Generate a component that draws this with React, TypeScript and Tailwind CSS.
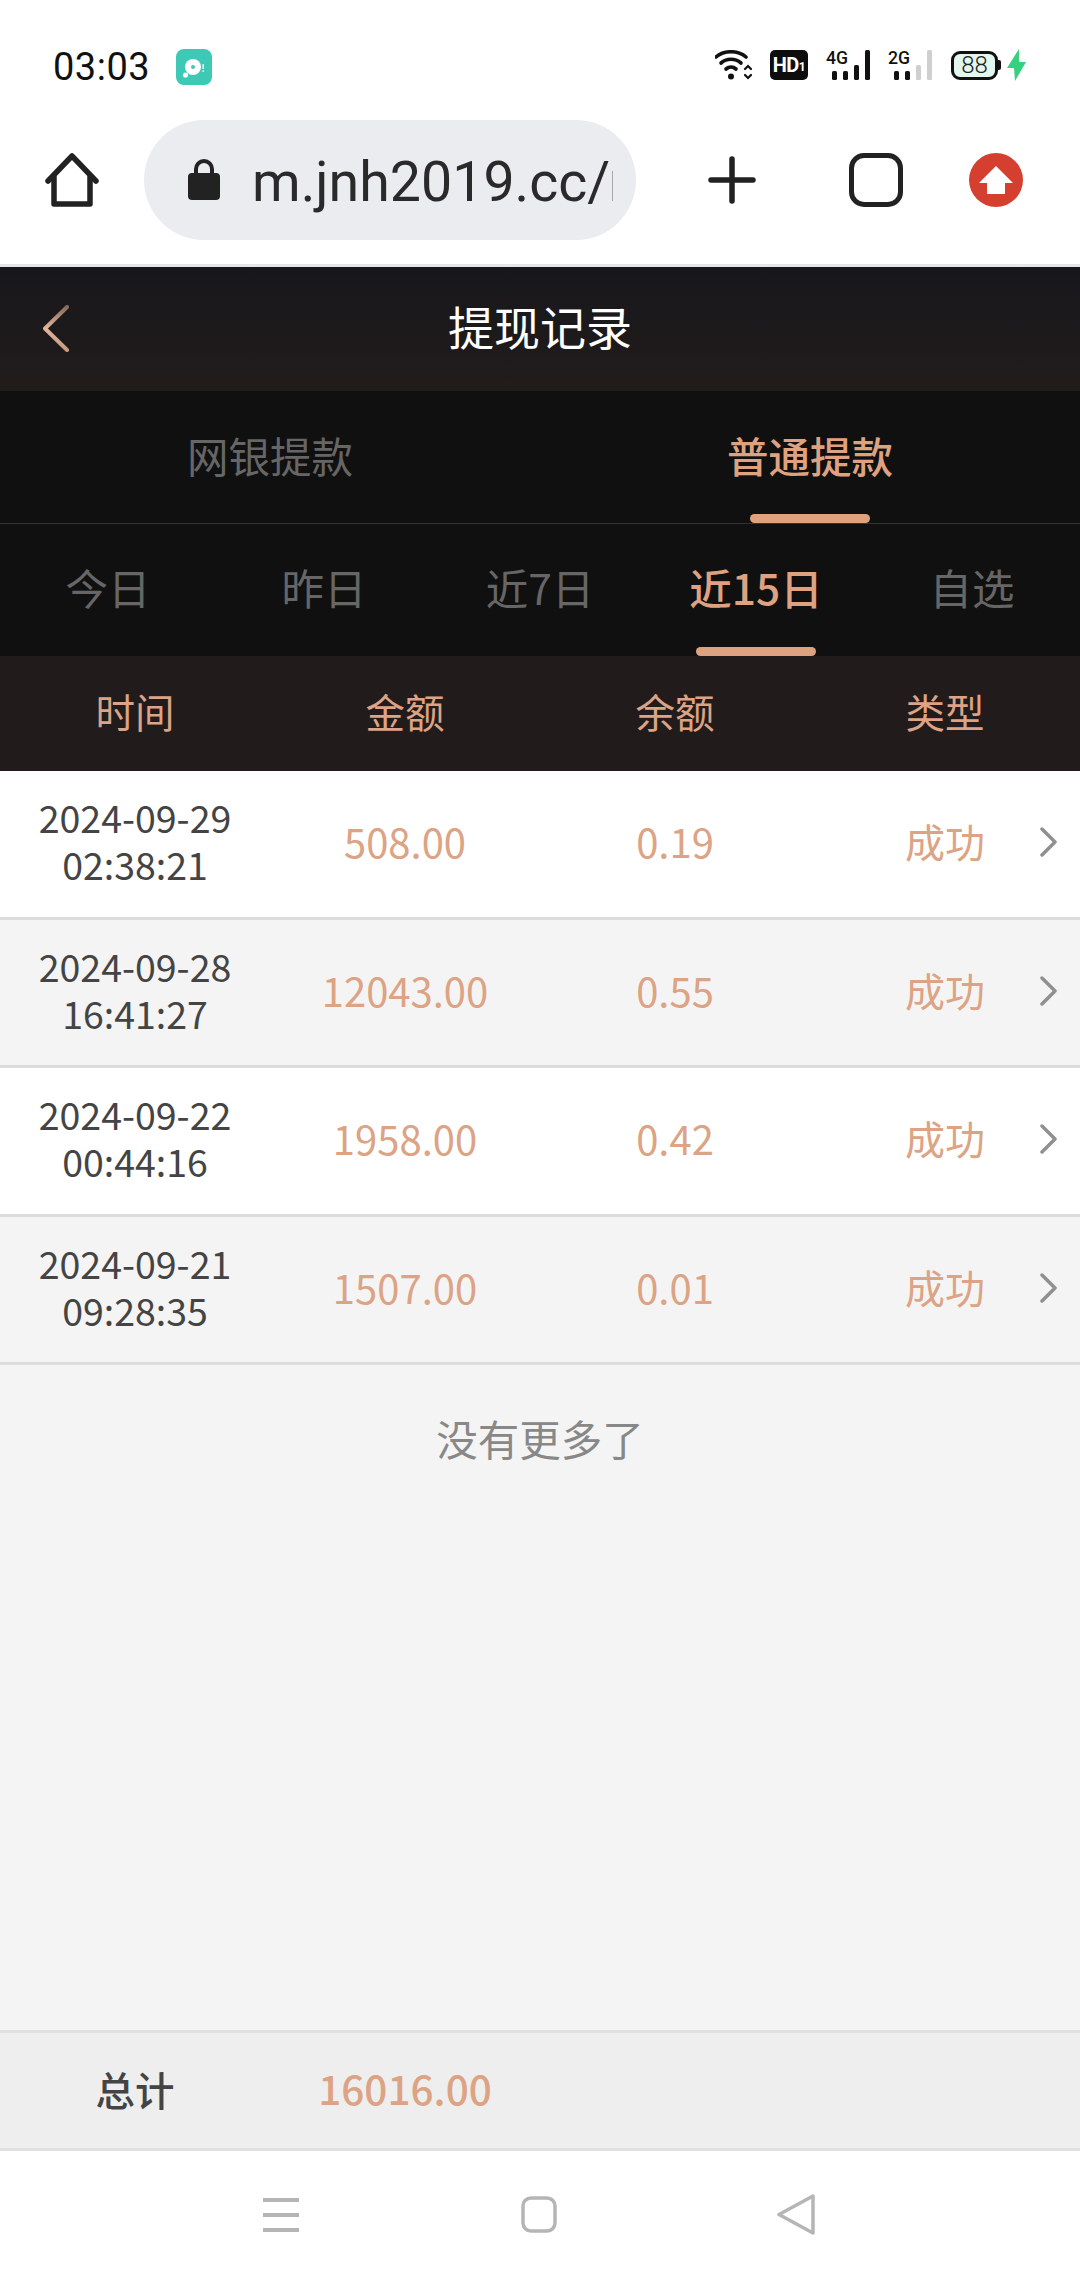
const ROWS = [
  { date: '2024-09-29', time: '02:38:21', amount: '508.00', balance: '0.19' },
  { date: '2024-09-28', time: '16:41:27', amount: '12043.00', balance: '0.55' },
  { date: '2024-09-22', time: '00:44:16', amount: '1958.00', balance: '0.42' },
  { date: '2024-09-21', time: '09:28:35', amount: '1507.00', balance: '0.01' },
];

function Signal({ label, lit }: { label: string; lit: number }) {
  return (
    <svg className="overflow-visible" width="44" height="30" viewBox="0 0 44 30">
      <text x="0" y="14" fontSize="19" fontWeight="500" fontFamily="Roboto" fill="#111" textLength="22" lengthAdjust="spacingAndGlyphs">
        {label}
      </text>
      {[
        [6, 21, 9],
        [17, 21, 9],
        [28, 15, 15],
        [39, 0, 30],
      ].map(([x, y, h], i) => (
        <rect key={x} x={x} y={y} width="5" height={h} rx="1.5" fill={i < lit ? '#111' : '#cfcfcf'} />
      ))}
    </svg>
  );
}

function StatusBar() {
  return (
    <div className="flex h-[118px] items-start justify-between pt-[48px] pr-[54px] pl-[53px] font-['Roboto',sans-serif]">
      <div className="flex items-center">
        <span className="mt-[1px] text-[38px] leading-[36px] tracking-[0.5px] text-[#111]">03:03</span>
        <svg className="ml-[26px]" width="36" height="36" viewBox="0 0 36 36">
          <rect width="36" height="36" rx="8" fill="#3ec8b6" />
          <circle cx="17" cy="18" r="8" fill="#fff" />
          <circle cx="17" cy="18" r="2" fill="#3ec8b6" />
          <circle cx="9.5" cy="26" r="2.6" fill="#fff" />
          <rect x="26.5" y="15" width="1.5" height="5" fill="#fff" />
          <rect x="26.5" y="21.5" width="1.5" height="1.5" fill="#fff" />
        </svg>
      </div>
      <div className="flex items-center pt-[1px]">
        <svg width="38" height="30" viewBox="0 0 38 30" fill="none" stroke="#111" strokeWidth="3.6" strokeLinecap="round">
          <path d="M1 7C9 0 23 0 31 7" />
          <path d="M6 13C12 8 20 8 26 13" />
          <path d="M11 19C14 16.5 18 16.5 21 19" />
          <circle cx="16" cy="26.5" r="3" fill="#111" stroke="none" />
          <path d="M30 19l3-3 3 3M30 25l3 3 3-3" strokeWidth="2.2" />
        </svg>
        <span className="ml-[17px] flex h-[30px] w-[38px] items-center justify-center rounded-[5px] bg-[#0d0d0d] text-[20px] leading-none font-bold tracking-[-0.5px] text-white">
          HD<span className="mt-[3px] text-[12px]">1</span>
        </span>
        <span className="ml-[18px] flex">
          <Signal label="4G" lit={4} />
        </span>
        <span className="ml-[18px] flex">
          <Signal label="2G" lit={2} />
        </span>
        <span className="ml-[19px] flex items-center">
          <span className="flex h-[29px] w-[47px] items-center justify-center rounded-[9px] border-[3px] border-[#111] bg-[#e2f7ee] text-[24px] leading-none font-light text-[#222]">
            88
          </span>
          <span className="h-[10px] w-[3px] rounded-r-[2px] bg-[#111]" />
        </span>
        <svg className="ml-[6px]" width="19" height="32" viewBox="0 0 19 32">
          <path d="M12 0L0 19h7l1 13 11-19h-7z" fill="#34d17f" />
        </svg>
      </div>
    </div>
  );
}

function BrowserBar() {
  return (
    <div className="flex h-[146px] items-start pt-[2px] font-['Roboto',sans-serif]">
      <div className="flex w-[144px] justify-center">
        <svg className="mt-[33px]" width="54" height="54" viewBox="0 0 54 54" fill="none" stroke="#222" strokeWidth="5.5" strokeLinecap="round" strokeLinejoin="round">
          <path d="M3 28L27 3l24 25" />
          <path d="M9 24v27h36V24" />
        </svg>
      </div>
      <div className="flex h-[120px] w-[492px] items-center overflow-hidden rounded-[60px] bg-[#ebecf0] pl-[44px]">
        <svg width="32" height="42" viewBox="0 0 32 42" className="mb-[2px] shrink-0">
          <path d="M8 18v-7a8 8 0 0 1 16 0v7" fill="none" stroke="#222" strokeWidth="4" />
          <rect y="15" width="32" height="27" rx="4" fill="#222" />
        </svg>
        <span className="mt-[5px] ml-[32px] text-[55.5px] leading-none whitespace-nowrap text-[#2a2a2a]">m.jnh2019.cc/</span>
        <span className="mt-[12px] ml-[2px] h-[30px] w-[1px] bg-[#aaa]" />
      </div>
      <svg className="mt-[36px] ml-[72px]" width="48" height="48" viewBox="0 0 48 48" stroke="#222" strokeWidth="5.5" strokeLinecap="round">
        <path d="M24 3v42M3 24h42" />
      </svg>
      <div className="mt-[33px] ml-[93px] h-[54px] w-[54px] rounded-[15px] border-[5.5px] border-[#222]" />
      <svg className="mt-[33px] ml-[66px]" width="54" height="54" viewBox="0 0 54 54">
        <circle cx="27" cy="27" r="27" fill="#d43f30" />
        <path d="M27 13L44 30H36V41H18V30H10z" fill="#fff" />
      </svg>
    </div>
  );
}

function Header() {
  return (
    <div className="relative flex h-[127px] items-center justify-center border-t-[3px] border-[#e6e6e6] bg-[linear-gradient(#17171b,#221c1c)] bg-clip-padding pb-[8px]">
      <svg className="absolute top-[38px] left-[43px]" width="26" height="47" viewBox="0 0 26 47" fill="none" strokeWidth="4" strokeLinecap="round" strokeLinejoin="round">
        <defs>
          <linearGradient id="back" x1="0" y1="0" x2="0" y2="1">
            <stop offset="0" stopColor="#8a6a58" />
            <stop offset="0.5" stopColor="#e0b59c" />
            <stop offset="1" stopColor="#c99a80" />
          </linearGradient>
        </defs>
        <path d="M24 2L2 23.5 24 45" stroke="url(#back)" />
      </svg>
      <span className="text-[46px] leading-none text-white">提现记录</span>
    </div>
  );
}

function MainTabs() {
  return (
    <div className="flex h-[133px] border-b border-[#333] bg-[#101010]">
      <div className="flex flex-1 justify-center pt-[39px] text-[41.5px] leading-[50px] text-[#666]">网银提款</div>
      <div className="relative flex flex-1 justify-center pt-[39px] text-[41.5px] leading-[50px] font-medium text-[#dfa281]">
        普通提款
        <span className="absolute bottom-0 left-[210px] h-[9px] w-[120px] rounded-[5px] bg-[#dfa281]" />
      </div>
    </div>
  );
}

function DayTabs() {
  return (
    <div className="flex h-[132px] bg-[#101010] text-[42.5px] leading-[50px] text-[#666]">
      <div className="flex w-[216px] justify-center pt-[38px]">今日</div>
      <div className="flex w-[216px] justify-center pt-[38px]">昨日</div>
      <div className="flex w-[216px] justify-center pt-[38px]">近7日</div>
      <div className="relative flex w-[216px] justify-center pt-[38px] font-medium text-[#dfa281]">
        近15日
        <span className="absolute bottom-0 left-[48px] h-[9px] w-[120px] rounded-[5px] bg-[#dfa281]" />
      </div>
      <div className="flex w-[216px] justify-center pt-[38px]">自选</div>
    </div>
  );
}

function TableHead() {
  return (
    <div className="flex h-[115px] items-center bg-[#221b1b] pb-[6px] text-[39.5px] text-[#dca384]">
      <span className="w-[270px] text-center">时间</span>
      <span className="w-[270px] text-center">金额</span>
      <span className="w-[270px] text-center">余额</span>
      <span className="w-[270px] text-center">类型</span>
    </div>
  );
}

function Row({ row, odd }: { row: (typeof ROWS)[number]; odd: boolean }) {
  return (
    <div className={`relative flex h-[148.5px] items-center border-b-[3px] border-[#dcdcdc] pb-[5px] text-[40px] text-[#dca384] ${odd ? 'bg-[#f4f4f4]' : 'bg-white'}`}>
      <div className="mb-[2px] w-[270px] text-center text-[37.5px] leading-[47px] text-[#444]">
        <div>{row.date}</div>
        <div>{row.time}</div>
      </div>
      <span className="w-[270px] text-center">{row.amount}</span>
      <span className="w-[270px] text-center">{row.balance}</span>
      <span className="w-[270px] text-center">成功</span>
      <svg className="absolute top-[56px] right-[23px]" width="17" height="30" viewBox="0 0 17 30" fill="none" stroke="#909090" strokeWidth="3.5" strokeLinecap="round" strokeLinejoin="round">
        <path d="M2 2l13 13L2 28" />
      </svg>
    </div>
  );
}

export default function App() {
  return (
    <div className="flex h-[2280px] w-[1080px] flex-col overflow-hidden bg-white font-['Noto_Sans_CJK_SC',sans-serif]">
      <StatusBar />
      <BrowserBar />
      <Header />
      <MainTabs />
      <DayTabs />
      <TableHead />
      <div>
        {ROWS.map((row, i) => (
          <Row key={row.date} row={row} odd={i % 2 === 1} />
        ))}
      </div>
      <div className="flex-1 bg-[#f4f4f4] pt-[43px] text-center text-[41.5px] leading-[60px] text-[#888]">没有更多了</div>
      <div className="flex h-[121px] items-center border-y-[3px] border-[#e0e0e0] bg-[#eeeeee] pb-[4px]">
        <span className="w-[270px] text-center text-[39.5px] font-medium text-[#444]">总计</span>
        <span className="w-[270px] text-center text-[40.5px] font-medium text-[#dca384]">16016.00</span>
      </div>
      <div className="flex h-[129px] items-start justify-center bg-white pt-[45px] pr-[3px]">
        <svg className="mt-[2px]" width="36" height="34" viewBox="0 0 36 34" fill="#b5b5b5">
          <rect y="0" width="36" height="4" />
          <rect y="15" width="36" height="4" />
          <rect y="30" width="36" height="4" />
        </svg>
        <svg className="ml-[222px]" width="36" height="37" viewBox="0 0 36 37" fill="none" stroke="#b5b5b5" strokeWidth="3.5">
          <rect x="2" y="2" width="32" height="33" rx="8" />
        </svg>
        <svg className="ml-[220px] -mt-[2px]" width="38" height="41" viewBox="0 0 38 41" fill="none" stroke="#b5b5b5" strokeWidth="3.5" strokeLinejoin="round">
          <path d="M36 2v37L2 20.5z" />
        </svg>
      </div>
    </div>
  );
}
